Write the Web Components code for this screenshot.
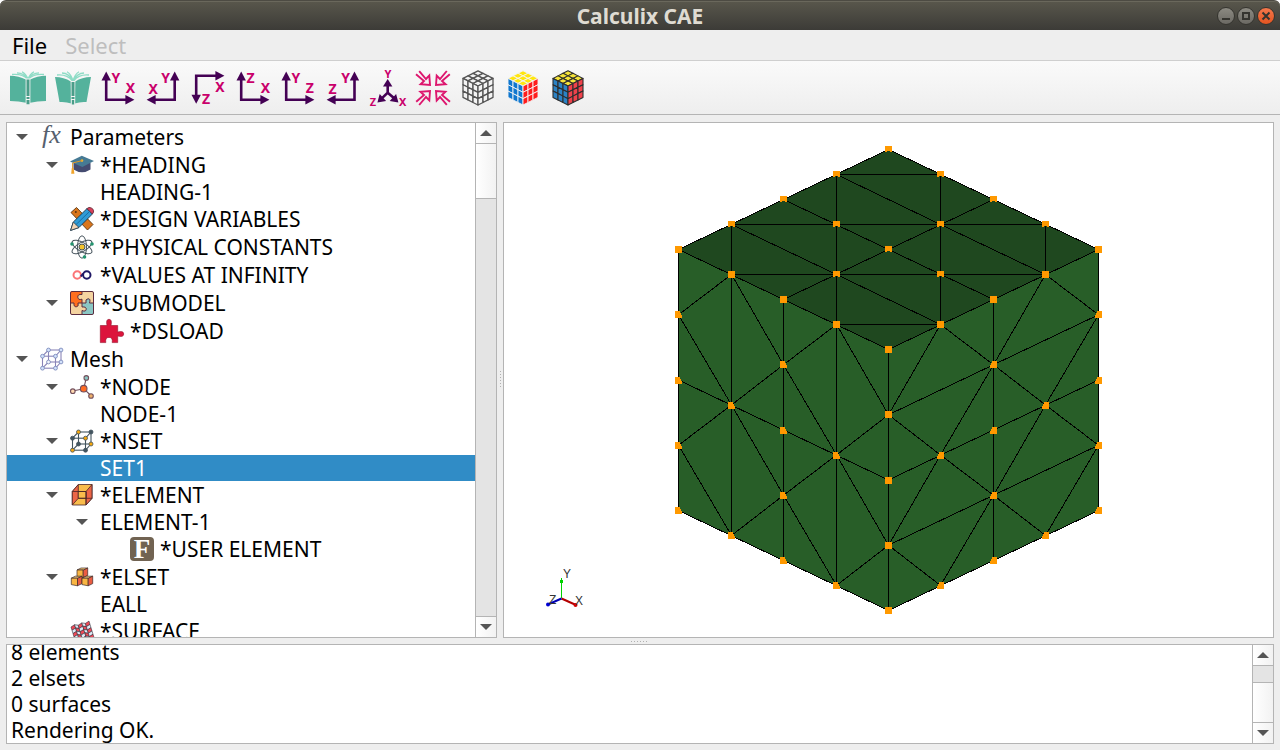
<!DOCTYPE html>
<html lang="en">
<head>
<meta charset="utf-8">
<title>Calculix CAE</title>
<style>
  html, body { margin: 0; height: 100%; background: #fff; }
  body { font-family: "Noto Sans", "Open Sans", sans-serif; font-size: 21px; color: #000; }
</style>
</head>
<body>
<cae-window></cae-window>

<script>
const define = (name, html, setup) => {
  const tpl = document.createElement('template');
  tpl.innerHTML = html;
  customElements.define(name, class extends HTMLElement {
    connectedCallback() {
      if (this.shadowRoot) return;
      this.attachShadow({ mode: 'open' }).append(tpl.content.cloneNode(true));
      if (setup) setup(this, this.shadowRoot);
    }
  });
};
const pts = list => list.map(p => p.join(',')).join(' ');

/* ---------- icons ---------- */
const axisText = (s, x, y, size = 14) =>
  `<text x="${x}" y="${y}" font-family="Noto Sans, sans-serif" font-weight="700" font-size="${size}" fill="#c9006b">${s}</text>`;
const axisLine = d => `<path d="${d}" fill="none" stroke="#440154" stroke-width="2.6"/>`;
const head = (x, y, a, l = 9) =>
  `<path transform="translate(${x} ${y}) rotate(${a})" d="M0 0L${-l} -4.7V4.7Z" fill="#440154"/>`;
const axesRight = (v, h) => axisLine('M6.2 8V29.7H28') + head(6.2, 1.6, -90) + head(34.4, 29.7, 0) +
  axisText(v, 11.5, 12.6) + axisText(h, 25.8, 23.2);
const axesLeft = (v, h, x = 29.7) => axisLine(`M${x} 8V29.7H8`) + head(x, 1.6, -90) + head(1.6, 29.7, 180) +
  axisText(v, 16.2, 12.6) + axisText(h, 3.4, 23.5);

function rubik(top, left, right, line, w) {
  const T = [18, .8], ex = [15, 7.6], ey = [-15, 7.6], h = 19;
  const P = (o, u, v, i, j) => [o[0] + (u[0] * i + v[0] * j) / 3, o[1] + (u[1] * i + v[1] * j) / 3];
  let s = '';
  const faces = [[T, ex, ey, top], [[3, 8.4], [15, 7.6], [0, h], left], [[18, 16], [15, -7.6], [0, h], right]];
  for (const [o, u, v, c] of faces)
    for (let i = 0; i < 3; i++) for (let j = 0; j < 3; j++)
      s += `<polygon points="${pts([P(o, u, v, i, j), P(o, u, v, i + 1, j), P(o, u, v, i + 1, j + 1), P(o, u, v, i, j + 1)])}" fill="${c}" stroke="${line}" stroke-width="${w}" stroke-linejoin="round"/>`;
  return s;
}
function lattice(nodes, edges, line, fills, stroke, r) {
  return edges.map(([a, b]) => `<path d="M${nodes[a]}L${nodes[b]}" stroke="${line}" stroke-width="1.1"/>`).join('') +
    nodes.map((n, i) => `<circle cx="${n[0]}" cy="${n[1]}" r="${r}" fill="${fills[i % fills.length]}" stroke="${stroke}" stroke-width=".8"/>`).join('');
}
const cubeNodes = [[8.5, 3], [21, 3], [2.5, 9.2], [15.5, 9.2], [8.5, 15], [21, 15], [2.5, 21.2], [15.5, 21.2]];
const cubeEdges = [[0, 1], [2, 3], [4, 5], [6, 7], [0, 2], [1, 3], [4, 6], [5, 7], [0, 4], [1, 5], [2, 6], [3, 7]];
const box = (x, y) =>
  `<g transform="translate(${x} ${y})" stroke="#3c2a2a" stroke-width=".7" stroke-linejoin="round"><path d="M0 2l4-2h6.700l-4 2z" fill="#fbd07a"/><path d="M0 2h6.200v7.600l-6.200-1.200z" fill="#f9b642"/><path d="M6.200 2.200L10.700 0V7.400L6.200 9.600z" fill="#ea5c41"/></g>`;
const outArrow = a => `<path transform="rotate(${a} 18 18)" d="M1 4.200L9 11L5.600 14.300L15 15L14.300 5.400L11 9L4.200 1.200" fill="none" stroke="#dd166e" stroke-width="1.900"/>`;

function cloth() {
  let s = '';
  const at = (c, r) => [1 + c * 3.6 + r * 1, 7.500 + r * 3.300 - c * .9 + (c % 2 ? -.9 : .5)];
  for (let r = 0; r < 5; r++) for (let c = 0; c < 5; c++)
    s += `<polygon points="${pts([at(c, r), at(c + 1, r), at(c + 1, r + 1), at(c, r + 1)])}" fill="${(r + c) % 2 ? '#dfe9f5' : '#f04a58'}" stroke="#332f3a" stroke-width=".6"/>`;
  return s;
}

const ICONS = {
  'book-open': [36, `<g fill="none" stroke="#8fdcc6" stroke-width="1.3"><path d="M2 4.500Q12 3.500 17.500 9M7 2.800Q14 3 18 9M12 1.800Q16 4 18 9M34 4.500Q24 3.500 18.500 9M29 2.800Q22 3 18 9M24 1.800Q20 4 18 9"/></g>
    <path d="M0 5.800Q9 6 15.800 9.500V32.800Q9 31 0 31Z" fill="#54b29c"/><path d="M36 5.800Q27 6 20.200 9.500V32.800Q27 31 36 31Z" fill="#54b29c"/>
    <path d="M15.800 8.500H20.200V34.500H15.800Z" fill="#f5f5f5"/><path d="M16.500 9.600h3V26h-3zM16.500 27h3v2h-3zM16.500 30h3v4.200h-3z" fill="#4a9d89"/>`],
  'book-tilt': [36, `<g fill="none" stroke="#8fdcc6" stroke-width="1.3"><path d="M2 5Q12 4 17.500 11M7 3Q14 3.200 18 11M12 1.800Q16 4 18 11M34 5Q24 4 18.500 11M29 3Q22 3.200 18 11M24 1.800Q20 4 18 11"/></g>
    <path d="M0 7Q9 7 15.800 11.500L16.300 33.500Q11 31.500 4.500 32Z" fill="#54b29c"/><path d="M36 7Q27 7 20.200 11.500L19.700 33.500Q25 31.500 31.500 32Z" fill="#54b29c"/>
    <path d="M15.800 11H20.200V34.500H15.800Z" fill="#f5f5f5"/><path d="M16.500 12h3V26h-3zM16.500 27h3v2h-3zM16.800 30h2.400v4.500h-2.400z" fill="#4a9d89"/>`],
  'xy': [36, axesRight('Y', 'X')],
  'xy-back': [36, axesLeft('Y', 'X')],
  'xz-down': [36, axisLine('M6.2 28V5.7H27') + head(34.4, 5.7, 0) + head(6.2, 33.8, 90) + axisText('X', 25.2, 22.3) + axisText('Z', 12, 33.8)],
  'xz': [36, axesRight('Z', 'X')],
  'yz': [36, axesRight('Y', 'Z')],
  'yz-back': [36, axesLeft('Y', 'Z', 29.5)],
  'iso': [36, axisLine('M17.7 14V22.7L11.5 28.6M17.7 22.7L24.5 28.6') + head(17.7, 9, -90, 7.5) + head(7.4, 32.6, 137, 7.5) + head(28.4, 32.6, 43, 7.5) +
    axisText('Y', 14.5, 7.6, 11) + axisText('Z', -.2, 36, 11) + axisText('X', 29, 36, 11)],
  'fit': [36, [0, 90, 180, 270].map(outArrow).join('')],
  'cube-wire': [36, rubik('#f4f4f4', '#f4f4f4', '#f4f4f4', '#555', 1.3)],
  'cube-flat': [36, rubik('#ffe60f', '#0f77cf', '#ff1c1c', '#f4f4f4', .9)],
  'cube-edges': [36, rubik('#f5e43a', '#2b82c4', '#f0424b', '#2e2e2e', 1.1)],

  'fx': [24, `<text x="2" y="18" font-family="Liberation Serif, serif" font-style="italic" font-size="26" fill="#56606e">fx</text>`],
  'cap': [24, `<path d="M3.500 10v6.500q8.500 5.500 17 0V10z" fill="#444b70"/><path d="M0 8.600L11.800 2.800L24 8L12.300 14z" fill="#467a94"/>
    <circle cx="12" cy="7.600" r="1.300" fill="#e8b434"/><path d="M12 7.600L2.600 10V16" fill="none" stroke="#e09a2a" stroke-width="1"/><path d="M1.800 15h1.800l.8 5.800h-3.200z" fill="#f0a42c"/>`],
  'design': [24, `<path d="M1 5.500L6.500 .5L23 17.500L17.500 23Z" fill="#d9761c" stroke="#5a3410" stroke-width=".9"/><circle cx="5.800" cy="5" r="1" fill="#5a3410"/>
    <path d="M3.300 15L17 1.600L22.400 7L9 20.500L.6 23.400Z" fill="#2f9bd6" stroke="#20384b" stroke-width=".9"/><path d="M3.300 15L9 20.500L.6 23.400Z" fill="#f3d4b4" stroke="#20384b" stroke-width=".8"/>
    <path d="M17 1.600L19 .4Q23.800 .8 23.600 5L22.400 7Z" fill="#d8415b" stroke="#5a1f2c" stroke-width=".8"/><path d="M5.800 17.800L19.500 4.500" stroke="#1d6da1" stroke-width="1"/>`],
  'atom': [24, `<g fill="none" stroke="#46535c" stroke-width="1"><ellipse cx="12" cy="12" rx="4.500" ry="11.200"/><ellipse cx="12" cy="12" rx="4.500" ry="11.200" transform="rotate(60 12 12)"/><ellipse cx="12" cy="12" rx="4.500" ry="11.200" transform="rotate(120 12 12)"/></g>
    <circle cx="12" cy="12" r="3" fill="#f3c32d" stroke="#46535c"/><g fill="#23946f"><circle cx="2" cy="9" r="1.800"/><circle cx="22" cy="9" r="1.800"/><circle cx="14.500" cy="22" r="1.800"/></g>`],
  'infinity': [24, `<g fill="none" stroke-width="2"><circle cx="7.200" cy="12" r="3.700" stroke="#fb7376"/><circle cx="16.800" cy="12" r="3.700" stroke="#1f1765"/></g><path d="M10.800 13.500L13.200 10.500" stroke="#1f1765" stroke-width="2"/>`],
  'puzzle': [24, `<path d="M.5 .5H12V12H.5z" fill="#ff6e1f"/><path d="M12 .5H23.500V12H12z" fill="#f4d3a0"/><path d="M.5 12H12V23.500H.5z" fill="#f4d3a0"/><path d="M12 12H23.500V23.500H12z" fill="#8bc7c4"/>
    <g stroke="#5b2c3f" stroke-width="1"><path d="M12 .5V3.500Q7.500 3 7.800 6.200T12 8.200V12" fill="#f4d3a0"/><path d="M.5 12H4Q3.500 16 6.300 15.800T8 12H12" fill="#ff6e1f"/><path d="M12 12H16Q15 8 18 7.800T19.500 12H23.500" fill="#8bc7c4"/><path d="M12 12V16Q16.500 15.500 16.200 18.300T12 19.500V23.500" fill="#f4d3a0"/><rect x=".5" y=".5" width="23" height="23" rx="1.500" fill="none"/></g>`],
  'piece': [24, `<path d="M.3 6.500H7Q5.600 .3 9 .3T11 6.500H17.700V13Q23.700 11.400 23.700 15T17.700 17V23.600H12.200Q13 18.400 9 18.400T5.800 23.600H.3Z" fill="#dc143c" stroke="#96102b" stroke-width=".6"/>`],
  'mesh': [24, lattice(cubeNodes, cubeEdges, '#8a85b8', ['#d3e2fb', '#d3e2fb', '#d3e2fb', '#d3e2fb', '#f2f5fc', '#d3e2fb', '#d3e2fb', '#d3e2fb'], '#7481b5', 1.9)],
  'node': [24, `<g stroke="#74505c" stroke-width="1.100"><path d="M13.700 13.700L16.300 3M13.700 13.700L2.700 16M13.700 13.700L21.300 21"/><circle cx="13.700" cy="13.700" r="3.300" fill="#ff6a22"/><circle cx="16.300" cy="2.900" r="2.300" fill="#8bc7c4"/><circle cx="2.800" cy="16.200" r="2.300" fill="#ffd9b0"/><circle cx="21" cy="21" r="2.300" fill="#eeb06a"/></g>`],
  'nset': [24, lattice(cubeNodes, cubeEdges, '#42545f', ['#f5a70f', '#42545f', '#42545f', '#f5a70f', '#42545f', '#f5a70f', '#f5a70f', '#42545f'], '#42545f', 2)],
  'element': [24, `<g stroke="#4a2426" stroke-width=".8" stroke-linejoin="round"><path d="M2.300 22V8.500L8.300 1.500H22V15.300L16 22Z" fill="#f9bd4c"/><path d="M2.300 8.500L8.300 1.500V15.300L2.300 22Z" fill="#ec6547"/><path d="M16 8.500L22 1.500V15.300L16 22Z" fill="#ec6547"/><path d="M8.300 8.500H16V15.300H8.300z" fill="#f9bd4c"/><path d="M2.300 8.500H16V22M8.300 15.300H22" fill="none"/></g>`],
  'letter-f': [24, `<rect width="24" height="24" rx="4" fill="#716352"/><text x="12" y="20.500" text-anchor="middle" font-family="Liberation Serif, serif" font-weight="700" font-size="27" fill="#fff">F</text>`],
  'elset': [24, box(7, 3) + box(1.3, 11.2) + box(12, 11.2)],
  'surface': [24, cloth()],
};

define('cae-icon', `<style>:host{display:block;flex:none}svg{display:block;overflow:visible}</style>`, (el, root) => {
  const [size, art] = ICONS[el.getAttribute('name')];
  root.innerHTML += `<svg width="${size}" height="${size}" viewBox="0 0 ${size} ${size}" aria-hidden="true">${art}</svg>`;
});

/* ---------- title bar ---------- */
define('cae-titlebar', `<style>
  :host { display: grid; grid-template-columns: 1fr auto 1fr; align-items: center; height: 30px; box-sizing: border-box;
    padding: 0 5px; border-radius: 6px 6px 0 0; border-top: 1px solid #4d4b43; box-shadow: inset 0 1px #6a685c;
    background: linear-gradient(#59574c, #3c3b37); color: #dfdbd2; }
  h1 { grid-column: 2; margin: 0; font-size: 21px; line-height: 28px; font-weight: 700; }
  div { display: flex; justify-content: flex-end; gap: 2px; }
  button { width: 18px; height: 18px; padding: 0; border: 1px solid #35342f; border-radius: 50%; background: linear-gradient(#8c8a82, #6b6963); }
  .close { background: linear-gradient(#f4784c, #e35420); }
  svg { display: block; fill: none; stroke: #35342f; stroke-width: 2; }
</style>
<h1><slot></slot></h1>
<div>
  <button aria-label="Minimize"><svg width="16" height="16"><path d="M4 11H12"/></svg></button>
  <button aria-label="Maximize"><svg width="16" height="16"><path d="M5 5H11V11H5Z"/></svg></button>
  <button class="close" aria-label="Close"><svg width="16" height="16"><path d="M4.500 4.500L11.500 11.500M11.500 4.500L4.500 11.500"/></svg></button>
</div>`);

/* ---------- menu bar ---------- */
define('cae-menubar', `<style>
  :host { display: flex; gap: 18px; height: 30px; padding: 0 12px; background: #eee; border-bottom: 1px solid #cfcfcf; font-size: 22px; }
  button { font: inherit; line-height: 30px; padding: 0; border: 0; background: none; color: #000; }
  button:disabled { color: #bebebe; }
</style><button>File</button><button disabled>Select</button>`);

/* ---------- tool bar ---------- */
define('cae-toolbar', `<style>
  :host { display: flex; align-items: center; gap: 1px; height: 53px; padding: 0 6px; background: linear-gradient(#fafafa, #eee); border-bottom: 1px solid #b4b4b4; }
  button { display: grid; place-items: center; width: 44px; height: 44px; padding: 0; border: 0; background: none; }
</style>`, (el, root) => {
  for (const [icon, label] of [['book-open', 'Open'], ['book-tilt', 'Import'], ['xy', 'View +XY'], ['xy-back', 'View -XY'], ['xz-down', 'View -XZ'],
    ['xz', 'View +XZ'], ['yz', 'View +YZ'], ['yz-back', 'View -YZ'], ['iso', 'Isometric view'], ['fit', 'Fit view'],
    ['cube-wire', 'Wireframe'], ['cube-flat', 'Surface'], ['cube-edges', 'Surface with edges']]) {
    const b = document.createElement('button');
    b.setAttribute('aria-label', label);
    b.innerHTML = `<cae-icon name="${icon}"></cae-icon>`;
    root.append(b);
  }
});

/* ---------- scroll bar ---------- */
define('cae-scrollbar', `<style>
  :host { display: flex; flex-direction: column; flex: none; width: 20px; border-left: 1px solid #b4b4b4; background: #e4e4e4; }
  button { display: grid; place-items: center; height: 20px; flex: none; padding: 0; border: 0; background: linear-gradient(90deg, #fff, #f2f2f2); }
  .track { flex: 1; display: flex; flex-direction: column; border: solid #b4b4b4; border-width: 1px 0; }
  .thumb { background: linear-gradient(90deg, #fff, #f2f2f2); border-bottom: 1px solid #b4b4b4; height: 54px; }
  :host([end]) .track { justify-content: flex-end; }
  :host([end]) .thumb { border: 0; border-top: 1px solid #b4b4b4; height: 39px; }
  svg { display: block; fill: #555; }
</style>
<button aria-label="Scroll up"><svg width="12" height="6"><path d="M0 6L6 0L12 6Z"/></svg></button>
<div class="track"><div class="thumb"></div></div>
<button aria-label="Scroll down"><svg width="12" height="6"><path d="M0 0L6 6L12 0Z"/></svg></button>`);

/* ---------- tree ---------- */
define('cae-tree-row', `<style>
  :host { display: flex; align-items: center; height: 26px; white-space: nowrap; }
  :host([icon]) { height: 28px; }
  :host([selected]) { background: #308cc6; color: #fff; }
  button { display: grid; place-items: center; flex: none; width: 30px; height: 26px; margin-right: 3px; padding: 0; border: 0; background: none; }
  svg { fill: #555; }
  button[hidden] { display: grid; visibility: hidden; }
  cae-icon { margin-right: 6px; }
  span { line-height: 26px; }
</style>
<button aria-label="Collapse"><svg width="12" height="6"><path d="M0 0L6 6L12 0Z"/></svg></button><span><slot></slot></span>`, (el, root) => {
  el.setAttribute('role', 'treeitem');
  el.style.paddingLeft = 30 * el.getAttribute('level') + 'px';
  root.querySelector('button').hidden = !el.hasAttribute('open');
  if (el.hasAttribute('icon')) {
    const i = document.createElement('cae-icon');
    i.setAttribute('name', el.getAttribute('icon'));
    root.querySelector('span').before(i);
  }
});
define('cae-tree', `<style>
  :host { display: flex; min-height: 0; border: 1px solid #b4b4b4; background: #fff; }
  div { flex: 1; min-width: 0; overflow: hidden; }
</style><div role="tree"></div><cae-scrollbar></cae-scrollbar>`, (el, root) => {
  root.querySelector('div').innerHTML = [
    [0, 'Parameters', 'fx', 1], [1, '*HEADING', 'cap', 1], [2, 'HEADING-1'], [1, '*DESIGN VARIABLES', 'design'],
    [1, '*PHYSICAL CONSTANTS', 'atom'], [1, '*VALUES AT INFINITY', 'infinity'], [1, '*SUBMODEL', 'puzzle', 1],
    [2, '*DSLOAD', 'piece'], [0, 'Mesh', 'mesh', 1], [1, '*NODE', 'node', 1], [2, 'NODE-1'], [1, '*NSET', 'nset', 1],
    [2, 'SET1', '', 0, 1], [1, '*ELEMENT', 'element', 1], [2, 'ELEMENT-1', '', 1], [3, '*USER ELEMENT', 'letter-f'],
    [1, '*ELSET', 'elset', 1], [2, 'EALL'], [1, '*SURFACE', 'surface'],
  ].map(([l, t, i, o, s]) => `<cae-tree-row level="${l}"${i ? ` icon="${i}"` : ''}${o ? ' open' : ''}${s ? ' selected' : ''}>${t}</cae-tree-row>`).join('');
});

/* ---------- 3D view ---------- */
define('cae-viewport', `<style>
  :host { display: grid; place-items: center; position: relative; min-width: 0; min-height: 0; overflow: hidden; border: 1px solid #b4b4b4; background: #fff; }
  svg { display: block; }
  .triad { position: absolute; left: 36px; bottom: 22px; }
  .triad text { font: 12px "Liberation Sans", sans-serif; fill: #333; }
</style>
<svg class="model" width="432" height="470" shape-rendering="crispEdges" role="img" aria-label="Meshed cube"></svg>
<svg class="triad" width="50" height="50" role="img" aria-label="Axes">
  <path d="M21.500 33V13" stroke="#00d200"/><rect x="20" y="15" width="3" height="3" fill="#00d200"/>
  <path d="M21.500 33.500L36 40" stroke="#b40000" stroke-width="2"/><circle cx="35.500" cy="40" r="2" fill="#d20000"/>
  <path d="M21.500 33.500L8 39.500" stroke="#0000b4" stroke-width="2"/><circle cx="8" cy="39.500" r="2" fill="#0000d2"/>
  <text x="23" y="13">Y</text><text x="35" y="40">X</text><text x="9" y="39">Z</text>
</svg>`, (el, root) => {
  /* vertical mesh lines sit on pixel centres, mirrored about the middle edge */
  const snap = x => Number.isInteger(x) ? x + (x < 215 ? .5 : -.5) : x;
  const top = (a, b) => [snap(215.5 + 52.5 * (a - b)), 4.5 + 25 * (a + b)];
  const left = (c, d) => [snap(5.5 + 52.5 * c), 104.5 + 25 * c + 65.25 * d];
  const right = (c, d) => [snap(215.5 + 52.5 * c), 204.5 - 25 * c + 65.25 * d];
  let fills = '', marks = '', lines = '';
  for (const [P, fill, diagonal, skin] of [[top, '#1f481f', 'across', 't'], [left, '#285e28', 'down', 'l'], [right, '#285e28', 'across', 'r']]) {
    fills += `<polygon points="${pts([P(0, 0), P(4, 0), P(4, 4), P(0, 4)])}" fill="${fill}"/>`;
    for (let i = 0; i < 4; i += 2) for (let j = 0; j < 4; j += 2) {
      const n = P(i + 1, j), e = P(i + 2, j + 1), s = P(i + 1, j + 2), w = P(i, j + 1);
      lines += `<polygon points="${pts([P(i, j), P(i + 2, j), P(i + 2, j + 2), P(i, j + 2)])}"/><polygon points="${pts([n, e, s, w])}"/>`;
      lines += `<path d="M${diagonal === 'down' ? n : w}L${diagonal === 'down' ? s : e}"/>`;
    }
    for (let i = 0; i < 5; i++) for (let j = 0; j < 5; j++) {
      if (i % 2 && j % 2) continue;
      const front = skin === 't' ? (i === 4 || j === 4) : (j === 0 || (skin === 'l' ? i === 4 : i === 0));
      const [x, y] = P(i, j).map(v => Math.floor(v) - 3);
      if (front) marks += `<path d="M${x} ${y}h7v7h-7z"/>`;
      else if (skin === 't') marks += `<path d="M${x} ${y}h7v6h-2v-1h-3v1h-2z"/>`;
      else if (skin === 'l') marks += `<path d="M${x} ${y}h5v2h1v2h1v3h-7z"/>`;
      else marks += `<path d="M${x + 7} ${y}h-5v2h-1v2h-1v3h7z"/>`;
    }
  }
  root.querySelector('.model').innerHTML =
    fills + `<g fill="none" stroke="#000" stroke-width="1">${lines}</g><g fill="#ff9900">${marks}</g>`;
});

/* ---------- log ---------- */
define('cae-log', `<style>
  :host { display: flex; height: 98px; border: 1px solid #b4b4b4; background: #fff; }
  div { flex: 1; display: flex; flex-direction: column; justify-content: flex-end; overflow: hidden; padding: 0 4px; }
  p { margin: 0; line-height: 26px; flex: none; }
</style><div role="log"><p>8 elements</p><p>2 elsets</p><p>0 surfaces</p><p>Rendering OK.</p></div><cae-scrollbar end></cae-scrollbar>`);

/* ---------- splitter handle ---------- */
define('cae-splitter', `<style>
  :host { display: grid; place-items: center; width: 6px; }
  i { width: 1px; height: 18px; background: repeating-linear-gradient(#b0b0b0 0 1px, transparent 1px 3px); }
  :host([flat]) { width: auto; height: 6px; }
  :host([flat]) i { width: 18px; height: 1px; background: repeating-linear-gradient(90deg, #b0b0b0 0 1px, transparent 1px 3px); }
</style><i></i>`);

/* ---------- window ---------- */
define('cae-window', `<style>
  :host { display: flex; flex-direction: column; height: 100vh; }
  main { flex: 1; min-height: 0; display: flex; flex-direction: column; padding: 7px 6px 6px; background: #eee; }
  .work { flex: 1; min-height: 0; display: grid; grid-template-columns: minmax(300px, 491px) 6px 1fr; grid-template-rows: 100%; }
  cae-splitter:not([flat]) { align-self: stretch; }
</style>
<cae-titlebar>Calculix CAE</cae-titlebar>
<cae-menubar></cae-menubar>
<cae-toolbar></cae-toolbar>
<main>
  <div class="work"><cae-tree></cae-tree><cae-splitter></cae-splitter><cae-viewport></cae-viewport></div>
  <cae-splitter flat></cae-splitter>
  <cae-log></cae-log>
</main>`);
</script>
</body>
</html>
